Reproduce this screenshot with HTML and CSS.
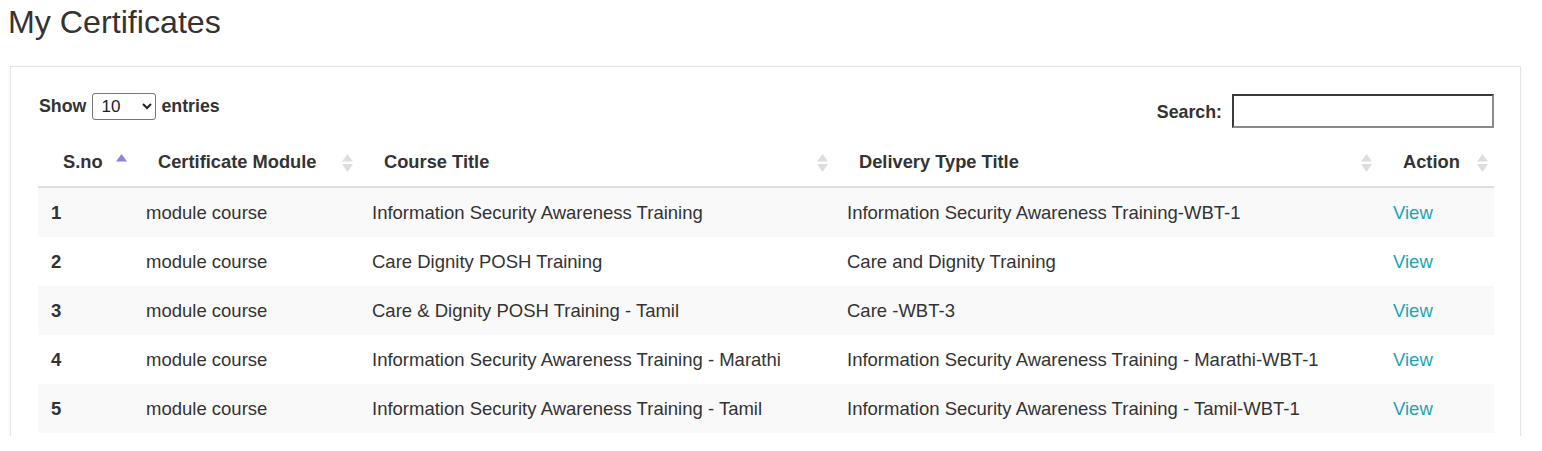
FILE: index.html
```html
<!DOCTYPE html>
<html lang="en">
<head>
<meta charset="utf-8">
<title>My Certificates</title>
<link rel="stylesheet" href="styles.css">
</head>
<body>
<div class="page">
  <h1 class="page-title">My Certificates</h1>
  <div class="card">
    <div class="dt-controls">
      <label class="dt-length">Show
        <select class="dt-select">
          <option>10</option>
          <option>25</option>
          <option>50</option>
          <option>100</option>
        </select>
        entries</label>
      <label class="dt-filter">Search:<input type="search" class="dt-search"></label>
    </div>
    <table class="dt-table">
      <colgroup>
        <col class="c1"><col class="c2"><col class="c3"><col class="c4"><col class="c5">
      </colgroup>
      <thead>
        <tr>
          <th><div class="th-in"><span>S.no</span>
            <svg class="sort" width="11" height="20" viewBox="0 0 11 20"><path d="M5.5 1 L11 8.5 L0 8.5 Z" fill="#8585dc"/></svg></div></th>
          <th><div class="th-in"><span>Certificate Module</span>
            <svg class="sort" width="11" height="20" viewBox="0 0 11 20"><path d="M5.5 1 L11 8.5 L0 8.5 Z" fill="#dedede"/><path d="M0 11 L11 11 L5.5 19 Z" fill="#dedede"/></svg></div></th>
          <th><div class="th-in"><span>Course Title</span>
            <svg class="sort" width="11" height="20" viewBox="0 0 11 20"><path d="M5.5 1 L11 8.5 L0 8.5 Z" fill="#dedede"/><path d="M0 11 L11 11 L5.5 19 Z" fill="#dedede"/></svg></div></th>
          <th><div class="th-in"><span>Delivery Type Title</span>
            <svg class="sort" width="11" height="20" viewBox="0 0 11 20"><path d="M5.5 1 L11 8.5 L0 8.5 Z" fill="#dedede"/><path d="M0 11 L11 11 L5.5 19 Z" fill="#dedede"/></svg></div></th>
          <th><div class="th-in"><span>Action</span>
            <svg class="sort" width="11" height="20" viewBox="0 0 11 20"><path d="M5.5 1 L11 8.5 L0 8.5 Z" fill="#dedede"/><path d="M0 11 L11 11 L5.5 19 Z" fill="#dedede"/></svg></div></th>
        </tr>
      </thead>
      <tbody>
        <tr>
          <td class="num">1</td>
          <td>module course</td>
          <td>Information Security Awareness Training</td>
          <td>Information Security Awareness Training-WBT-1</td>
          <td><a href="#" class="view">View</a></td>
        </tr>
        <tr>
          <td class="num">2</td>
          <td>module course</td>
          <td>Care Dignity POSH Training</td>
          <td>Care and Dignity Training</td>
          <td><a href="#" class="view">View</a></td>
        </tr>
        <tr>
          <td class="num">3</td>
          <td>module course</td>
          <td>Care &amp; Dignity POSH Training - Tamil</td>
          <td>Care -WBT-3</td>
          <td><a href="#" class="view">View</a></td>
        </tr>
        <tr>
          <td class="num">4</td>
          <td>module course</td>
          <td>Information Security Awareness Training - Marathi</td>
          <td>Information Security Awareness Training - Marathi-WBT-1</td>
          <td><a href="#" class="view">View</a></td>
        </tr>
        <tr>
          <td class="num">5</td>
          <td>module course</td>
          <td>Information Security Awareness Training - Tamil</td>
          <td>Information Security Awareness Training - Tamil-WBT-1</td>
          <td><a href="#" class="view">View</a></td>
        </tr>
      </tbody>
    </table>
  </div>
</div>
</body>
</html>
```
FILE: styles.css
```css
html, body {
  margin: 0;
  padding: 0;
  background: #fff;
}

body {
  font-family: "Liberation Sans", Arial, sans-serif;
  color: #333;
}

.page {
  height: 436px;
  overflow: hidden;
  padding: 0 21px 0 10px;
}

.page-title {
  margin: 4px 0 26px -2px;
  font-size: 32.2px;
  line-height: 36px;
  font-weight: 400;
  color: #333;
}

.card {
  border: 1px solid #e6e6e6;
  box-shadow: 0 1px 3px rgba(0, 0, 0, 0.06);
  padding: 26px 26px 26px 27px;
  background: #fff;
}

.dt-controls {
  display: flex;
  justify-content: space-between;
  align-items: flex-start;
  font-size: 17.8px;
  font-weight: 700;
  color: #333;
}

.dt-length {
  display: flex;
  align-items: center;
  gap: 5px;
  height: 27px;
  padding-left: 1px;
}

.dt-select {
  width: 64px;
  height: 27px;
  margin-left: 1px;
  font-family: "Liberation Sans", Arial, sans-serif;
  font-size: 17px;
  color: #222;
  border: 1px solid #767676;
  border-radius: 3px;
  background: #fff;
  padding: 0 2px 0 4px;
}

.dt-filter {
  display: flex;
  align-items: center;
  gap: 10px;
  height: 34px;
  padding-top: 2px;
}

.dt-search {
  box-sizing: border-box;
  width: 262px;
  height: 34px;
  border-style: solid;
  border-width: 2px;
  border-color: #3a3a3a #8a8a8a #8a8a8a #3a3a3a;
  background: #fff;
  font-size: 16px;
  padding: 0 4px;
  margin-top: -2px;
}

.dt-table {
  width: 100%;
  margin-top: 7px;
  border-collapse: collapse;
  table-layout: fixed;
  font-size: 18.5px;
}

.c1 { width: 95px; }
.c2 { width: 226px; }
.c3 { width: 475px; }
.c4 { width: 544px; }
.c5 { width: 116px; }

.dt-table th {
  text-align: left;
  font-weight: 700;
  font-size: 18.3px;
  padding: 16px 6px 14px 25px;
  line-height: 20px;
  border-bottom: 2px solid #dddddd;
  color: #333;
}

.th-in {
  display: flex;
  justify-content: space-between;
  align-items: center;
  height: 20px;
}

.sort {
  display: block;
  flex: none;
  margin-top: 2px;
}

.dt-table td {
  padding: 14px 10px 14px 13px;
  line-height: 21px;
  color: #333;
  white-space: nowrap;
}

.dt-table tbody tr:nth-child(odd) {
  background: #f9f9f9;
}

.dt-table td.num {
  font-weight: 700;
}

.view {
  color: #1fa4ae;
  text-decoration: none;
  padding-left: 2px;
}
```
